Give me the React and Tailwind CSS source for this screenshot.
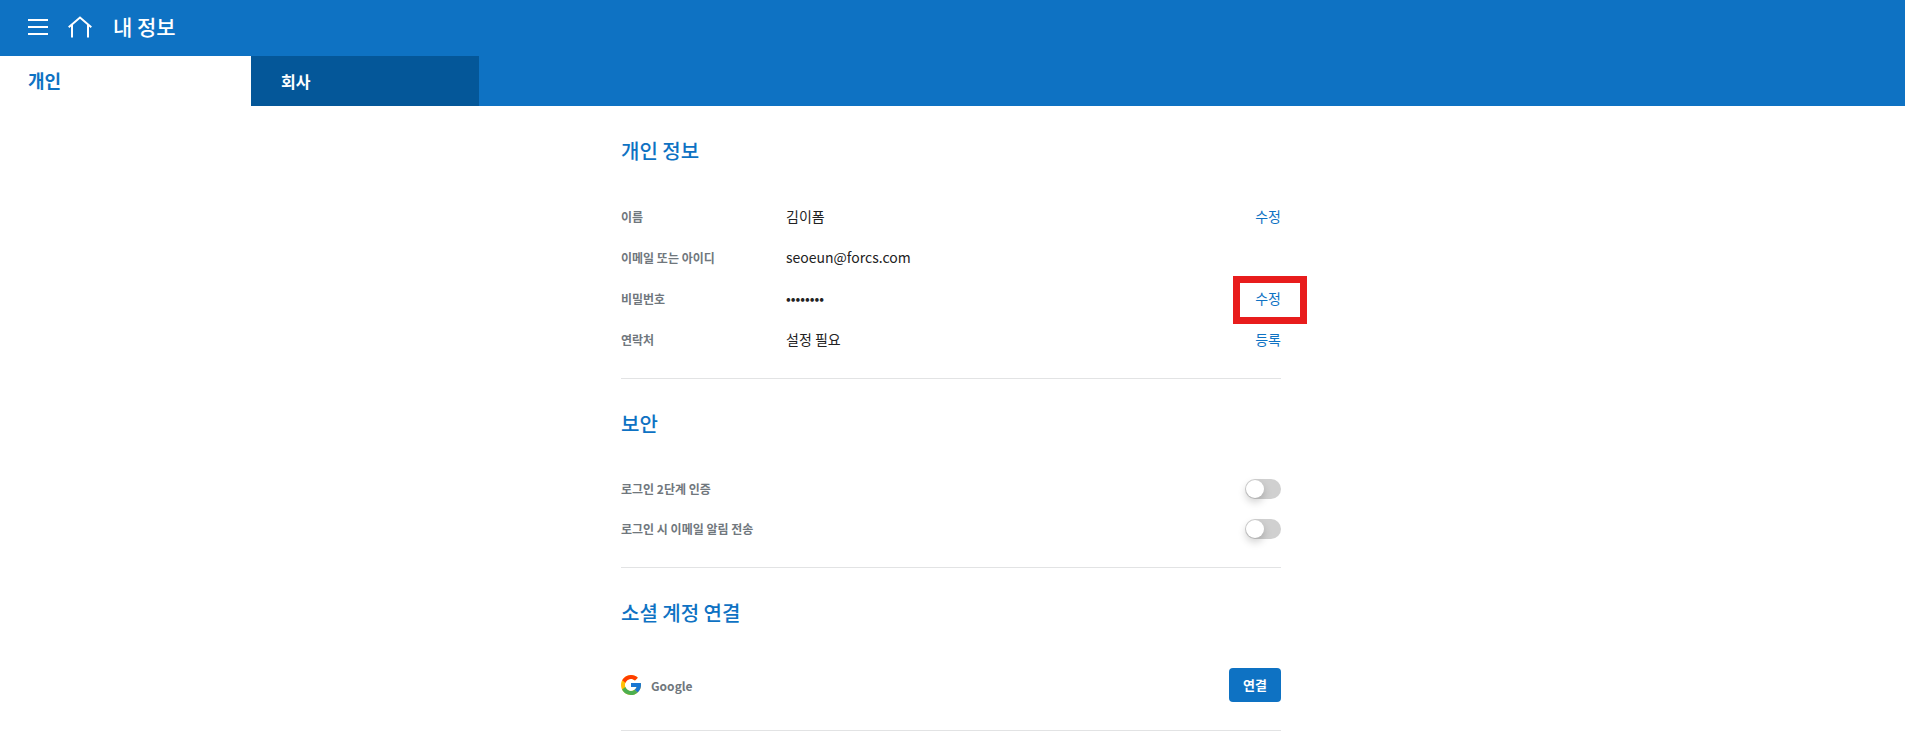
const profileRows = [
  { label: "이름", value: "김이폼", action: "수정" },
  { label: "이메일 또는 아이디", value: "seoeun@forcs.com" },
  { label: "비밀번호", value: "••••••••", action: "수정", highlighted: true },
  { label: "연락처", value: "설정 필요", action: "등록" },
];

const securityRows = [
  { id: "two-step", label: "로그인 2단계 인증" },
  { id: "mail-alert", label: "로그인 시 이메일 알림 전송" },
];

function MenuIcon() {
  return (
    <svg width="20" height="16" viewBox="0 0 20 16" fill="#fff" aria-hidden="true">
      <rect width="20" height="2" />
      <rect y="7" width="20" height="2" />
      <rect y="14" width="20" height="2" />
    </svg>
  );
}

function HomeIcon() {
  return (
    <svg width="24" height="22" viewBox="0 0 24 22" fill="none" stroke="#fff" strokeWidth="2" aria-hidden="true">
      <path d="M0.7 11.2 L12 1.6 L23.3 11.2" />
      <path d="M4 9 V21.5 M20 9 V21.5" />
    </svg>
  );
}

function GoogleIcon() {
  return (
    <svg width="20" height="20" viewBox="4 4 40 40" aria-hidden="true">
      <path fill="#FFC107" d="M43.611 20.083H42V20H24v8h11.303c-1.649 4.657-6.08 8-11.303 8-6.627 0-12-5.373-12-12s5.373-12 12-12c3.059 0 5.842 1.154 7.961 3.039l5.657-5.657C34.046 6.053 29.268 4 24 4 12.955 4 4 12.955 4 24s8.955 20 20 20 20-8.955 20-20c0-1.341-.138-2.65-.389-3.917z" />
      <path fill="#FF3D00" d="M6.306 14.691l6.571 4.819C14.655 15.108 18.961 12 24 12c3.059 0 5.842 1.154 7.961 3.039l5.657-5.657C34.046 6.053 29.268 4 24 4 16.318 4 9.656 8.337 6.306 14.691z" />
      <path fill="#4CAF50" d="M24 44c5.166 0 9.86-1.977 13.409-5.192l-6.19-5.238A11.91 11.91 0 0 1 24 36c-5.202 0-9.619-3.317-11.283-7.946l-6.522 5.025C9.505 39.556 16.227 44 24 44z" />
      <path fill="#1976D2" d="M43.611 20.083H42V20H24v8h11.303a12.04 12.04 0 0 1-4.087 5.571l6.19 5.238C36.971 39.205 44 34 44 24c0-1.341-.138-2.65-.389-3.917z" />
    </svg>
  );
}

function Section({ title, children }) {
  return (
    <section className="border-b border-[#e2e3e4] pt-[30px] pb-[18px]">
      <h2 className="mb-[30px] text-[20px] leading-[30px] font-medium text-[#0e72c3]">{title}</h2>
      {children}
    </section>
  );
}

export default function App() {
  return (
    <div className="min-h-screen bg-white font-['Noto_Sans_CJK_KR','Noto_Sans',sans-serif] text-[#222]">
      <header className="bg-[#0e72c3] text-white">
        <div className="flex h-14 items-center pl-7">
          <button type="button" aria-label="메뉴" className="mr-5 pb-[2px]">
            <MenuIcon />
          </button>
          <a href="#home" aria-label="홈" className="mr-[21px] pb-[2px]">
            <HomeIcon />
          </a>
          <h1 className="pb-1 text-[21px] leading-[30px] font-medium">내 정보</h1>
        </div>
        <nav className="flex h-[50px]">
          <a href="#personal" aria-current="page" className="flex w-[251px] items-center bg-white pb-[2px] pl-7 text-[18px] font-bold text-[#0e72c3]">
            개인
          </a>
          <a href="#company" className="flex w-[228px] items-center bg-[#045799] pl-[30px] text-[16px] font-bold">
            회사
          </a>
        </nav>
      </header>

      <main className="pr-[3px]">
        <div className="mx-auto max-w-[660px]">
          <Section title="개인 정보">
            <dl>
              {profileRows.map((row) => (
                <div key={row.label} className="flex h-[41px] items-center">
                  <dt className="w-[165px] text-[12px] font-bold text-[#70777d]">{row.label}</dt>
                  <dd className="flex-1 text-[14px]">{row.value}</dd>
                  {row.action && (
                    <dd className="relative">
                      <button type="button" className="block text-[14px] leading-[21px] text-[#0e72c3]">{row.action}</button>
                      {row.highlighted && (
                        <span className="pointer-events-none absolute -top-3 -right-[26px] h-12 w-[74px] border-[7px] border-[#e81c1c]" />
                      )}
                    </dd>
                  )}
                </div>
              ))}
            </dl>
          </Section>

          <Section title="보안">
            {securityRows.map((row) => (
              <div key={row.id} className="flex h-10 items-center justify-between">
                <label htmlFor={row.id} className="text-[12px] font-bold text-[#70777d]">{row.label}</label>
                <input
                  id={row.id}
                  type="checkbox"
                  role="switch"
                  className="h-5 w-9 appearance-none rounded-full bg-[#d0d0d0] p-px before:block before:size-[18px] before:rounded-full before:bg-white before:shadow-[0_4px_8px_rgba(0,0,0,0.2)] before:content-[''] checked:bg-[#0e72c3] checked:before:ml-4"
                />
              </div>
            ))}
          </Section>

          <Section title="소셜 계정 연결">
            <div className="flex h-[54px] items-center justify-between">
              <div className="flex items-center gap-[10px]">
                <GoogleIcon />
                <span className="pt-[2px] text-[12px] font-bold text-[#70777d]">Google</span>
              </div>
              <button type="button" className="h-[34px] w-[52px] rounded-[4px] bg-[#0e72c3] text-[13px] font-bold text-white">
                연결
              </button>
            </div>
          </Section>
        </div>
      </main>
    </div>
  );
}
